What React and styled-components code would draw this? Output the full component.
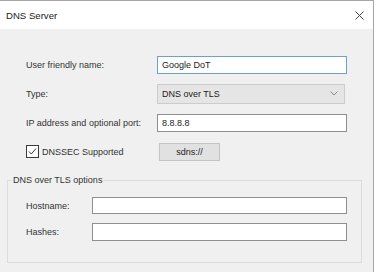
import React from "react";
import styled, { createGlobalStyle } from "styled-components";

const Global = createGlobalStyle`
  html, body { margin: 0; padding: 0; background: #ffffff; }
  body { font-family: "Liberation Sans", Arial, sans-serif; }
`;

const Window = styled.div`
  width: 373px;
  height: 271px;
  border-top: 1px solid #a6a6a6;
  border-right: 1px solid #a6a6a6;
  background: #f0f0f0;
  overflow: hidden;
  display: flex;
  flex-direction: column;
`;

const TitleBar = styled.div`
  height: 28px;
  background: #ffffff;
  display: flex;
  align-items: center;
  justify-content: space-between;
  padding: 0 9px 0 6px;
  font-size: 9.6px;
  color: #1a1a1a;
`;

const CloseButton = styled.div`
  width: 9px;
  height: 9px;
  display: flex;
  margin-top: 1px;
`;

const Body = styled.div`
  padding: 26px 0 0 0;
  display: flex;
  flex-direction: column;
`;

const FormGrid = styled.div`
  display: grid;
  grid-template-columns: ${(p) => p.$cols};
  grid-auto-rows: ${(p) => p.$rowH}px;
  row-gap: ${(p) => p.$gap}px;
  padding: ${(p) => p.$pt || 0}px 0 0 ${(p) => p.$pl}px;
  align-items: center;
`;

const Label = styled.span`
  font-size: 9px;
  color: #333333;
  white-space: nowrap;
`;

const TextInput = styled.div`
  box-sizing: border-box;
  width: ${(p) => p.$w}px;
  height: ${(p) => p.$h}px;
  background: #ffffff;
  border: 1px solid ${(p) => (p.$focused ? "#6c9fd2" : "#8f8f8f")};
  font-size: 9px;
  color: #1a1a1a;
  padding-left: 4px;
  display: flex;
  align-items: center;
`;

const Select = styled.div`
  box-sizing: border-box;
  width: 188px;
  height: 20px;
  background: #e5e5e5;
  border: 1px solid #cccccc;
  font-size: 9px;
  color: #1a1a1a;
  padding: 0 6px 0 4px;
  display: flex;
  align-items: center;
  justify-content: space-between;
`;

const CheckRow = styled.label`
  display: flex;
  align-items: center;
  gap: 3px;
`;

const Box = styled.span`
  box-sizing: border-box;
  width: 13px;
  height: 13px;
  border: 1px solid #3a3a3a;
  background: #ffffff;
  display: flex;
  align-items: center;
  justify-content: center;
`;

const Button = styled.div`
  box-sizing: border-box;
  width: 61px;
  height: 18px;
  background: #e1e1e1;
  border: 1px solid #c4c4c4;
  font-size: 9px;
  color: #1a1a1a;
  display: flex;
  align-items: center;
  justify-content: center;
  margin-left: 2px;
`;

const Group = styled.fieldset`
  margin: 14px 0 0 7px;
  width: 355px;
  height: 88px;
  box-sizing: border-box;
  border: 1px solid #dcdcdc;
  padding: 0;
  min-width: 0;
`;

const Legend = styled.legend`
  font-size: 9px;
  color: #333333;
  margin-left: 4px;
  padding: 0 1px;
`;

export default function App() {
  return (
    <>
      <Global />
      <Window>
        <TitleBar>
          <span>DNS Server</span>
          <CloseButton>
            <svg width="9" height="9" viewBox="0 0 9 9">
              <path d="M0.5 0.5 L8.5 8.5 M8.5 0.5 L0.5 8.5" stroke="#444" strokeWidth="1" fill="none" />
            </svg>
          </CloseButton>
        </TitleBar>
        <Body>
          <FormGrid $cols="131px 190px" $rowH={19} $gap={10} $pl={26}>
            <Label>User friendly name:</Label>
            <TextInput $w={190} $h={18} $focused>Google DoT</TextInput>
            <Label>Type:</Label>
            <Select>
              <span>DNS over TLS</span>
              <svg width="8" height="5" viewBox="0 0 8 5">
                <path d="M0.5 0.5 L4 4 L7.5 0.5" stroke="#8a8a8a" strokeWidth="1" fill="none" />
              </svg>
            </Select>
            <Label>IP address and optional port:</Label>
            <TextInput $w={190} $h={18}>8.8.8.8</TextInput>
            <CheckRow>
              <Box>
                <svg width="11" height="11" viewBox="0 0 11 11">
                  <path d="M2 5.5 L4.3 8 L9 2.5" stroke="#3a3a3a" strokeWidth="1" fill="none" />
                </svg>
              </Box>
              <Label>DNSSEC Supported</Label>
            </CheckRow>
            <Button>sdns://</Button>
          </FormGrid>
          <Group>
            <Legend>DNS over TLS options</Legend>
            <FormGrid $cols="66px 254px" $rowH={17} $gap={9} $pl={18} $pt={12}>
              <Label>Hostname:</Label>
              <TextInput $w={255} $h={17} />
              <Label>Hashes:</Label>
              <TextInput $w={255} $h={18} />
            </FormGrid>
          </Group>
        </Body>
      </Window>
    </>
  );
}
